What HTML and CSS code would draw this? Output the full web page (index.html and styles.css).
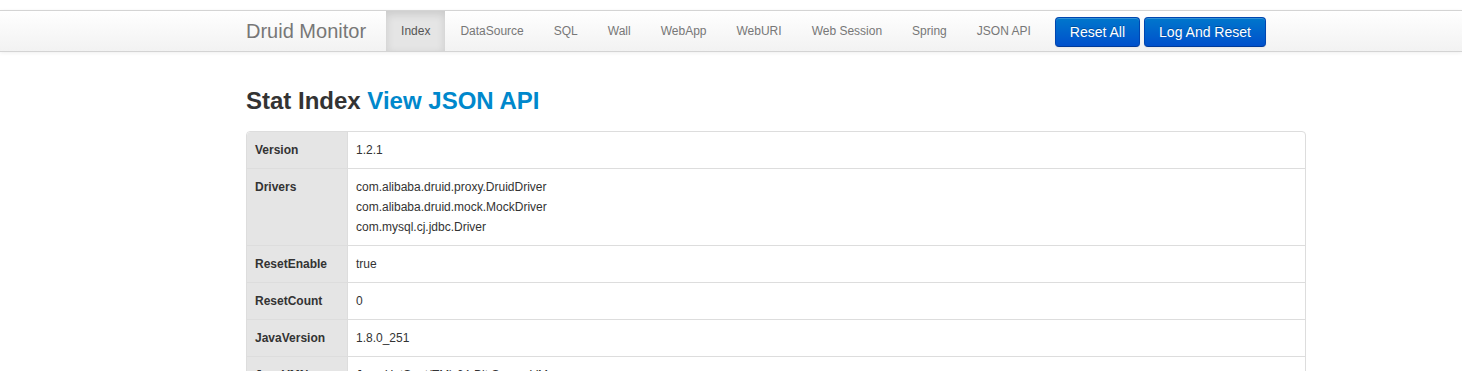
FILE: index.html
```html
<!DOCTYPE html>
<html lang="en">

<head>
    <meta charset="UTF-8">
    <meta name="viewport" content="width=device-width, initial-scale=1.0">
    <title>Druid Stat Index</title>
    <link rel="stylesheet" href="styles.css">
</head>

<body>
    <div class="navbar">
        <div class="container navInner">
            <a class="brand" href="#">Druid Monitor</a>
            <ul class="nav">
                <li class="active"><a href="#">Index</a></li>
                <li><a href="#">DataSource</a></li>
                <li><a href="#">SQL</a></li>
                <li><a href="#">Wall</a></li>
                <li><a href="#">WebApp</a></li>
                <li><a href="#">WebURI</a></li>
                <li><a href="#">Web Session</a></li>
                <li><a href="#">Spring</a></li>
                <li><a href="#">JSON API</a></li>
            </ul>
            <div class="navButtons">
                <button class="btn">Reset All</button>
                <button class="btn">Log And Reset</button>
            </div>
        </div>
    </div>

    <div class="container">
        <h2 class="title">Stat Index <a href="#">View JSON API</a></h2>
        <table class="statTable">
            <tr>
                <td class="label">Version</td>
                <td>1.2.1</td>
            </tr>
            <tr>
                <td class="label">Drivers</td>
                <td>com.alibaba.druid.proxy.DruidDriver<br>com.alibaba.druid.mock.MockDriver<br>com.mysql.cj.jdbc.Driver</td>
            </tr>
            <tr>
                <td class="label">ResetEnable</td>
                <td>true</td>
            </tr>
            <tr>
                <td class="label">ResetCount</td>
                <td>0</td>
            </tr>
            <tr>
                <td class="label">JavaVersion</td>
                <td>1.8.0_251</td>
            </tr>
            <tr>
                <td class="label">JavaVMName</td>
                <td>Java HotSpot(TM) 64-Bit Server VM</td>
            </tr>
            <tr>
                <td class="label">JavaClassPath</td>
                <td>/usr/local/app/lib/app.jar</td>
            </tr>
            <tr>
                <td class="label">StartTime</td>
                <td>2021-06-01 10:21:33</td>
            </tr>
        </table>
    </div>
</body>

</html>
```

FILE: styles.css
```css
html {
    margin: 0;
}

body {
    margin: 0;
    padding-top: 10px;
    background-color: #ffffff;
    color: #333333;
    font-family: "Liberation Sans", Arial, sans-serif;
    font-size: 12px;
    line-height: 20px;
}

a {
    text-decoration: none;
}

.container {
    width: 1060px;
    margin-left: 246px;
}

.navbar {
    background-image: linear-gradient(#ffffff, #f2f2f2);
    border-top: solid 1px #d4d4d4;
    border-bottom: solid 1px #d4d4d4;
    box-shadow: rgba(0, 0, 0, 0.065) 0px 1px 4px;
}

.navInner {
    display: flex;
    align-items: center;
    height: 40px;
}

.brand {
    font-size: 20px;
    line-height: 20px;
    padding: 10px 20px 10px 0;
    color: #777777;
}

.nav {
    display: flex;
    margin: 0;
    padding: 0;
    list-style: none;
}

.nav a {
    display: block;
    padding: 10px 15px;
    color: #777777;
}

.nav .active a {
    background-color: #e5e5e5;
    color: #555555;
    box-shadow: rgba(0, 0, 0, 0.125) 0px 3px 8px inset;
}

.navButtons {
    display: flex;
    gap: 4px;
    margin-left: 9px;
    padding-top: 1px;
}

.btn {
    padding: 4px 14px;
    font-family: "Liberation Sans", Arial, sans-serif;
    font-size: 14px;
    line-height: 20px;
    color: #ffffff;
    text-shadow: rgba(0, 0, 0, 0.25) 0px -1px 0px;
    background-image: linear-gradient(#0077cc, #0050cc);
    border: solid 1px #0046b0;
    border-bottom-color: #003a99;
    border-radius: 4px;
    box-shadow: rgba(255, 255, 255, 0.2) 0px 1px 0px inset, rgba(0, 0, 0, 0.05) 0px 1px 2px;
}

.title {
    margin: 29px 0 10px;
    font-size: 24px;
    line-height: 40px;
    font-weight: 700;
    color: #333333;
}

.title a {
    color: #0088cc;
}

.statTable {
    width: 100%;
    table-layout: fixed;
    border-collapse: separate;
    border-spacing: 0;
    border: solid 1px #dddddd;
    border-radius: 4px;
}

.statTable td {
    padding: 8px;
    line-height: 20px;
    text-align: left;
    vertical-align: top;
    border-top: solid 1px #dddddd;
    border-left: solid 1px #dddddd;
}

.statTable tr:first-child td {
    border-top: none;
}

.statTable td.label {
    width: 84px;
    border-left: none;
    background-color: #e5e5e5;
    font-weight: 700;
}

.statTable tr:first-child td.label {
    border-top-left-radius: 4px;
}
```
